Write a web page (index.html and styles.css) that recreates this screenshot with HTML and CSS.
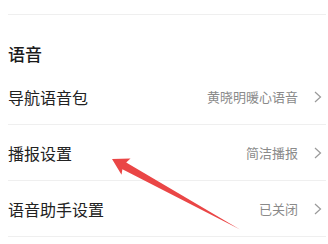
FILE: index.html
```html
<!DOCTYPE html>
<html lang="zh">
<head>
<meta charset="utf-8">
<link rel="stylesheet" href="styles.css">
</head>
<body>
<div class="page">
  <div class="top-gap"></div>
  <div class="section-title">语音</div>
  <div class="row">
    <span class="label">导航语音包</span>
    <span class="value">黄晓明暖心语音</span>
    <svg class="chev" width="8" height="12" viewBox="0 0 8 12"><polyline points="1,1 6.5,6 1,11" fill="none" stroke="#9a9a9a" stroke-width="1.2"/></svg>
  </div>
  <div class="row">
    <span class="label">播报设置</span>
    <span class="value">简洁播报</span>
    <svg class="chev" width="8" height="12" viewBox="0 0 8 12"><polyline points="1,1 6.5,6 1,11" fill="none" stroke="#9a9a9a" stroke-width="1.2"/></svg>
  </div>
  <div class="row">
    <span class="label">语音助手设置</span>
    <span class="value">已关闭</span>
    <svg class="chev" width="8" height="12" viewBox="0 0 8 12"><polyline points="1,1 6.5,6 1,11" fill="none" stroke="#9a9a9a" stroke-width="1.2"/></svg>
  </div>
  <svg class="arrow" width="328" height="244" viewBox="0 0 328 244">
    <polygon points="112,159 130.5,158.5 126.2,162.4 240,229.5 122.4,169.2 121.5,174.8" fill="#ea4646"/>
  </svg>
</div>
</body>
</html>
```
FILE: styles.css
```css
html, body {
  margin: 0;
  padding: 0;
  background: #ffffff;
}
body {
  font-family: "Noto Sans CJK SC", "Noto Sans", sans-serif;
  color: #222222;
}
.page {
  position: relative;
  width: 328px;
  height: 244px;
  overflow: hidden;
  padding: 0 2px 0 8px;
  box-sizing: border-box;
}
.top-gap {
  height: 14px;
  border-bottom: 1px solid #efefef;
}
.section-title {
  height: 54px;
  box-sizing: border-box;
  display: flex;
  align-items: flex-end;
  padding-bottom: 5px;
  font-size: 17px;
  line-height: 20px;
  font-weight: 500;
  color: #1a1a1a;
}
.row {
  height: 56px;
  box-sizing: border-box;
  border-bottom: 1px solid #efefef;
  display: flex;
  align-items: center;
  padding-right: 4px;
}
.label {
  flex: 1;
  font-size: 16px;
  line-height: 20px;
  color: #222222;
}
.value {
  font-size: 13px;
  line-height: 18px;
  color: #8a8a8a;
  margin-right: 16px;
}
.chev {
  display: block;
}
.arrow {
  position: absolute;
  left: 0;
  top: 0;
  pointer-events: none;
}
```
